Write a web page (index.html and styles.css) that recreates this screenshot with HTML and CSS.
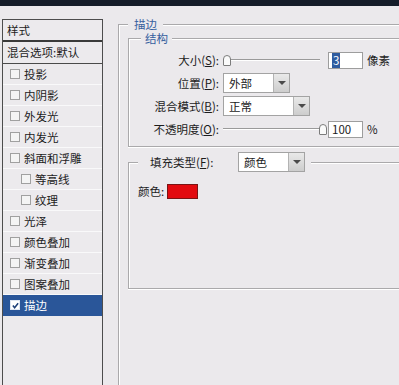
FILE: index.html
```html
<!DOCTYPE html>
<html lang="zh-CN">
<head>
    <meta charset="UTF-8">
    <title>图层样式 - 描边</title>
    <link rel="stylesheet" href="styles.css">
</head>
<body>
    <div class="titlebar"></div>
    <div class="dialog">
        <div class="styles-list">
            <div class="list-head">样式</div>
            <div class="list-blend">混合选项:默认</div>
            <div class="list-item"><span class="check"></span>投影</div>
            <div class="list-item"><span class="check"></span>内阴影</div>
            <div class="list-item"><span class="check"></span>外发光</div>
            <div class="list-item"><span class="check"></span>内发光</div>
            <div class="list-item"><span class="check"></span>斜面和浮雕</div>
            <div class="list-item sub"><span class="check"></span>等高线</div>
            <div class="list-item sub"><span class="check"></span>纹理</div>
            <div class="list-item"><span class="check"></span>光泽</div>
            <div class="list-item"><span class="check"></span>颜色叠加</div>
            <div class="list-item"><span class="check"></span>渐变叠加</div>
            <div class="list-item"><span class="check"></span>图案叠加</div>
            <div class="list-item selected">
                <span class="check checked">
                    <svg width="7" height="7" viewBox="0 0 8 8"><path d="M1 4 L3 6.5 L7 1.5" fill="none" stroke="#1d3f78" stroke-width="1.8"/></svg>
                </span>描边
            </div>
        </div>

        <div class="options">
            <fieldset class="group outer">
                <legend>描边</legend>
                <fieldset class="group structure">
                    <legend>结构</legend>
                    <div class="row">
                        <span class="row-label">大小(<u>S</u>):</span>
                        <div class="slider slider-size"><span class="thumb"></span><span class="track"></span></div>
                        <div class="num"><span class="num-sel">3</span></div>
                        <span class="unit">像素</span>
                    </div>
                    <div class="row">
                        <span class="row-label">位置(<u>P</u>):</span>
                        <div class="select select-pos"><span class="select-text">外部</span><span class="select-btn"></span></div>
                    </div>
                    <div class="row">
                        <span class="row-label">混合模式(<u>B</u>):</span>
                        <div class="select select-blend"><span class="select-text">正常</span><span class="select-btn"></span></div>
                    </div>
                    <div class="row">
                        <span class="row-label">不透明度(<u>O</u>):</span>
                        <div class="slider slider-opacity"><span class="track"></span><span class="thumb"></span></div>
                        <div class="num">100</div>
                        <span class="unit">%</span>
                    </div>
                </fieldset>

                <fieldset class="group fill">
                    <legend>
                        <span class="fill-label">填充类型(<u>F</u>):</span>
                        <div class="select select-fill"><span class="select-text">颜色</span><span class="select-btn"></span></div>
                    </legend>
                    <div class="color-row">
                        <span class="color-label">颜色:</span>
                        <span class="swatch"></span>
                    </div>
                </fieldset>
            </fieldset>
        </div>
    </div>
</body>
</html>
```

FILE: styles.css
```css
body {
    margin: 0;
    height: 385px;
    overflow: hidden;
    background: #ebe9ec;
    font-family: "Noto Sans CJK SC", "Noto Sans", sans-serif;
    font-size: 11.5px;
    color: #1c1c1c;
}
.titlebar {
    height: 6px;
    background: #151c29;
}
.dialog {
    display: flex;
    padding-top: 11px;
}

/* left list of styles */
.styles-list {
    margin: 2px 0 0 2px;
    width: 101px;
    height: 366px;
    box-sizing: border-box;
    border: 1px solid #4d4d4d;
    border-bottom: none;
    background: #eceaed;
}
.list-head {
    height: 20px;
    line-height: 20px;
    padding-left: 4px;
    border-bottom: 2px solid #3a3a3a;
}
.list-blend {
    height: 21px;
    line-height: 21px;
    padding-left: 4px;
    border-bottom: 1px solid #4a4a4a;
}
.list-item {
    height: 21px;
    box-sizing: border-box;
    display: flex;
    align-items: center;
    padding-left: 7px;
    border-bottom: 1px solid #f9f9fa;
}
.list-item.sub {
    padding-left: 18px;
}
.check {
    width: 8px;
    height: 8px;
    border: 1px solid #a0a0a0;
    background: #f4f4f4;
    margin-right: 4px;
    display: flex;
    align-items: center;
    justify-content: center;
}
.list-item.selected {
    background: #2a5699;
    border-bottom-color: #2a5699;
    color: #fff;
}
.check.checked {
    background: #fff;
    border-color: #dfe6f2;
}

/* right option groups */
.options {
    flex: 1;
    margin-left: 15px;
    min-width: 0;
}
.group {
    margin: 0;
    min-width: 0;
    border: 1px solid #aaa9ab;
    border-right: none;
    box-shadow: inset 1px 1px 0 #fff, 0 1px 0 #fff;
}
.group > legend {
    background: #ebe9ec;
    color: #37609e;
}
.outer {
    height: 368px;
    box-sizing: border-box;
    border-bottom: none;
    padding: 0 0 0 9px;
}
.outer > legend {
    padding: 0 6px;
    line-height: 14px;
}
.structure {
    padding: 4px 0 7px 12px;
}
.structure > legend {
    padding: 0 4px;
    line-height: 15px;
}
.row {
    display: flex;
    align-items: center;
    height: 20px;
}
.row + .row {
    margin-top: 3px;
}
.row-label {
    width: 78px;
    margin-right: 4px;
    text-align: right;
    white-space: nowrap;
}

.slider {
    display: flex;
    align-items: center;
    height: 12px;
}
.slider-size {
    width: 97px;
    margin-right: 8px;
}
.slider-opacity {
    width: 104px;
    margin-right: 1px;
}
.track {
    flex: 1;
    height: 1px;
    background: #9a9a9a;
    border-bottom: 1px solid #fff;
}
.thumb {
    width: 6px;
    height: 9px;
    border: 1px solid #7c7c7c;
    border-radius: 4px 4px 1px 1px;
    background: #fafafa;
}

.num {
    width: 35px;
    height: 17px;
    box-sizing: border-box;
    border: 1px solid #9d9d9d;
    background: #fff;
    padding-left: 3px;
    line-height: 15px;
}
.num-sel {
    display: inline-block;
    background: #2f5c9f;
    color: #fff;
    padding: 0 1px;
}
.unit {
    margin-left: 4px;
}

.select {
    display: flex;
    height: 20px;
    box-sizing: border-box;
    border: 1px solid #a3a3a3;
    background: #fff;
    color: #1c1c1c;
}
.select-pos,
.select-fill {
    width: 67px;
}
.select-blend {
    width: 87px;
}
.select-text {
    flex: 1;
    padding-left: 5px;
    line-height: 18px;
}
.select-btn {
    width: 15px;
    background: linear-gradient(#e9e9e9, #cdcdcd);
    border-left: 1px solid #b3b3b3;
    display: flex;
    align-items: center;
    justify-content: center;
}
.select-btn::after {
    content: "";
    border-left: 4px solid transparent;
    border-right: 4px solid transparent;
    border-top: 4px solid #4a4a4a;
}

.fill {
    margin-top: 5px;
    padding: 11px 0 89px 9px;
}
.fill > legend {
    display: flex;
    align-items: center;
    padding: 0 6px 0 12px;
    color: #1c1c1c;
}
.fill-label {
    width: 88px;
}
.color-row {
    display: flex;
    align-items: center;
    height: 16px;
}
.color-label {
    width: 29px;
}
.swatch {
    width: 31px;
    height: 15px;
    box-sizing: border-box;
    border: 1px solid #7a1414;
    background: #e20a0f;
}
```
